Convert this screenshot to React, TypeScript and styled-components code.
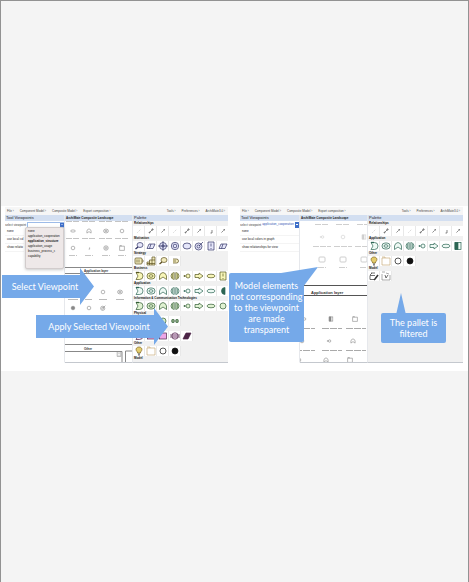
import React from "react";
import styled, { createGlobalStyle } from "styled-components";

const Global = createGlobalStyle`
  * { box-sizing: border-box; }
  body { margin: 0; background: #f4f4f4; font-family: "Liberation Sans", Arial, sans-serif; }
`;
const Page = styled.main`
  min-height: 100vh;
  padding-top: 205px;
  border: 1px solid #929292;
  border-bottom: 0;
  background: #f4f4f4;
  overflow: hidden;
`;
const Slide = styled.section`
  position: relative;
  display: grid;
  grid-template-columns: minmax(0, 1fr) minmax(0, 1fr);
  gap: 12px;
  padding: 1px 5px 8px 4px;
  background: #fff;
`;
const Screen = styled.article`
  display: flex;
  flex-direction: column;
  min-width: 0;
`;
const MenuBar = styled.nav`
  display: flex;
  justify-content: space-between;
  height: 8px;
  padding: 0 3px 0 2px;
  background: #f6f6f6;
`;
const MenuGroup = styled.div`
  display: flex;
  gap: 6px;
`;
const MenuButton = styled.button`
  border: 0;
  padding: 0;
  background: none;
  color: #444;
  font: 3px/7px "Liberation Sans", Arial, sans-serif;
  white-space: nowrap;
`;
const Columns = styled.div`
  display: grid;
  grid-template-columns: 60px minmax(0, 1fr) 95px;
  flex: 1;
`;
const Panel = styled.section<{ $shade?: boolean; $plain?: boolean }>`
  min-width: 0;
  overflow: hidden;
  border-right: ${(p) => (p.$shade ? "0" : "1px solid #e6e8ec")};
  border-bottom: 1px solid ${(p) => (p.$plain ? "#fff" : "#c4c8ce")};
  background: ${(p) => (p.$shade ? "#f1f1f1" : "#fff")};
`;
const PanelTitle = styled.h2<{ $small?: boolean }>`
  height: 6px;
  margin: 0;
  padding-left: 1px;
  background: #d3dff1;
  color: #222;
  font-size: ${(p) => (p.$small ? 3 : 4)}px;
  line-height: 6px;
  font-weight: ${(p) => (p.$small ? 700 : 400)};
  white-space: nowrap;
`;
const Field = styled.label`
  display: flex;
  align-items: center;
  height: 7px;
  color: #444;
  font-size: 3px;
  white-space: nowrap;
`;
const SelectWrap = styled.span<{ $open: boolean }>`
  display: flex;
  flex: 1;
  height: 6px;
  margin-left: 1px;
  border: ${(p) => (p.$open ? "1px solid #9dbbe8" : "0")};
  background: #fff;
`;
const Select = styled.select`
  appearance: none;
  flex: 1;
  min-width: 0;
  border: 0;
  padding: 0;
  background: none;
  color: #3455b4;
  font: 3px/5px "Liberation Sans", Arial, sans-serif;
`;
const Chevron = styled.svg`
  width: 4px;
  height: 100%;
  background: #3e6fc9;
`;
const Option = styled.p<{ $narrow: boolean }>`
  width: ${(p) => (p.$narrow ? "19px" : "auto")};
  overflow: hidden;
  margin: 0;
  padding-left: 2px;
  border-bottom: 1px solid #f4f4f4;
  color: #222;
  font-size: 3px;
  line-height: 7px;
  white-space: nowrap;
`;
const Popup = styled.ul`
  position: absolute;
  top: 21px;
  left: 24px;
  width: 39px;
  margin: 0;
  padding: 1px 2px 9px;
  border: 1px solid #d2cccc;
  border-radius: 2px;
  background: #eee8e8;
  box-shadow: 0 1px 3px #9998;
  list-style: none;
  color: #111;
  font-size: 3px;
  line-height: 5px;
  z-index: 2;
`;
const PopupItem = styled.li<{ $selected: boolean }>`
  font-weight: ${(p) => (p.$selected ? 700 : 400)};
  white-space: nowrap;
`;
const Diagram = styled.svg`
  display: block;
  width: 68px;
  height: 141px;
  font-family: "Liberation Sans", Arial, sans-serif;
`;
const GroupTitle = styled.h3`
  height: 5px;
  margin: 0;
  padding-left: 1px;
  color: #111;
  font-size: 3px;
  line-height: 5px;
  font-weight: 700;
  white-space: nowrap;
`;
const ToolRow = styled.div`
  display: flex;
  height: 10px;
  overflow: hidden;
`;
const Tool = styled.button`
  display: flex;
  flex: none;
  width: 12px;
  height: 10px;
  padding: 0 1px;
  border: 0;
  border-right: 1px solid #e8e8e8;
  background: #fff;
`;
const ToolIcon = styled.svg`
  width: 10px;
  height: 10px;
  overflow: visible;
`;
const Arrow = styled.div<{ $x: number; $y: number; $w: number }>`
  position: absolute;
  display: flex;
  align-items: center;
  justify-content: center;
  left: ${(p) => p.$x}px;
  top: ${(p) => p.$y}px;
  width: ${(p) => p.$w}px;
  height: 37px;
  padding-right: 6px;
  clip-path: polygon(0 7px, calc(100% - 14px) 7px, calc(100% - 14px) 0, 100% 50%, calc(100% - 14px) 100%, calc(100% - 14px) 30px, 0 30px);
  background: #75a9e9;
  color: #fff;
  font: 9px/11px Lato, sans-serif;
  white-space: nowrap;
  z-index: 3;
`;
const Bubble = styled.div<{ $x: number; $y: number; $w: number; $pad: number }>`
  position: absolute;
  left: ${(p) => p.$x}px;
  top: ${(p) => p.$y}px;
  width: ${(p) => p.$w}px;
  padding: ${(p) => p.$pad}px 0;
  border-radius: 2px;
  background: #75a9e9;
  color: #fff;
  font: 9px/11px Lato, sans-serif;
  text-align: center;
  white-space: pre-line;
  z-index: 3;
`;
const Tail = styled.svg<{ $x: number; $y: number }>`
  position: absolute;
  left: ${(p) => p.$x}px;
  top: ${(p) => p.$y}px;
  fill: #75a9e9;
`;

const shapes: Record<string, React.ReactNode> = {
  line: <path d="M3.500 6.500 6.500 3.500" />,
  dots: <path d="M3.500 6.500 6.500 3.500" strokeDasharray="1 1" opacity=".5" />,
  link: <><path d="M3.500 6.500 6.500 3.500" /><circle cx="3.500" cy="6.500" r=".5" /><circle cx="6.500" cy="3.500" r=".7" /></>,
  head: <><path d="M3.500 6.500 6.500 3.500" strokeDasharray="2 .5" /><path d="M5.500 3.500h1v1" /></>,
  corner: <path d="M6 4v3H4.500" />,
  magnify: <><ellipse cx="6" cy="4" rx="3" ry="2.500" /><path d="M4 6 1.500 8" strokeWidth="1.400" /></>,
  slant: <path d="M3 3h6L7 7.500H1Z M5 3 3.500 7.500" />,
  wheel: <><circle cx="5" cy="5" r="3.500" /><circle cx="5" cy="5" r="1.200" /><path d="M5 0v10M0 5h10" /></>,
  target: <><circle cx="5" cy="5" r="3.700" /><circle cx="5" cy="5" r="1.800" /></>,
  oval: <ellipse cx="5" cy="5" rx="4" ry="3" />,
  goal: <><circle cx="4.500" cy="5.500" r="3.500" /><circle cx="4.500" cy="5.500" r="1.500" /><path d="M5 5 9 1" /></>,
  note: <><path d="M2 1h6v8H2Z" /><path d="M5 2.500v3M5 7v1" /></>,
  resource: <><rect x="1" y="2" width="7" height="6" rx="1" /><path d="M3 3.500v3M5 3.500v3M8 4h1v2H8" /></>,
  steps: <path d="M1 9V6h2.500V4H6V1h3v8ZM3.500 6v3M6 4v5M1 7.500h8M6 4h3" />,
  open: <path d="M3 3h3.500a2 2 0 0 1 0 4H3M3 5h3" />,
  dee: <><path d="M2 1.500h3.500a3.500 3.500 0 0 1 0 7H2L4 5Z" /><path d="M2 1.500h3" strokeWidth="1.300" /></>,
  collab: <><rect x="1" y="2" width="8" height="6" rx="3" /><ellipse cx="5" cy="5" rx="2" ry="1.300" /></>,
  arch: <path d="M1.500 8.500V5Q2 2 5 1.500 8 2 8.500 5v3.500L5 6Z" />,
  interact: <path d="M4.200 1.500v7Q1 8 1 5t3.200-3.500ZM5.800 1.500v7Q9 8 9 5T5.800 1.500ZM2.700 3v4M7.300 3v4" />,
  event: <><circle cx="6" cy="5" r="2" /><path d="M1.500 5h2.500M3 4 2 5l1 1" /></>,
  process: <path d="M1 3.500h4V2l4 3-4 3V6.500H1Z" />,
  service: <ellipse cx="5" cy="5" rx="4" ry="1.800" />,
  half: <><rect x="2" y="1.500" width="6" height="7" /><path d="M2 1.500h3v7H2Z" fill="currentColor" /></>,
  solidhalf: <path d="M7 1.500a3.500 3.500 0 1 0 0 7Z" fill="currentColor" />,
  network: <path d="M1 5h8M2 3.500h2v3H2ZM6 3.500h2v3H6Z" />,
  package: <rect x="1.500" y="2" width="7" height="6" fill="#eda6e6" />,
  gap: <><circle cx="5" cy="5" r="3.200" /><path d="M0 4h10M0 6h10" /></>,
  plateau: <path d="M4 2h5L8 4H3ZM3 4h5L7 6H2ZM2 6h5L6 8H1Z" fill="currentColor" />,
  bulb: <><path d="M3.500 6C1 4 2 1 5 1s4 3 1.500 5v1h-3Z" fill="#e4cd6c" /><path d="M4 8h2M4 9h2" stroke="#333" /></>,
  folder: <><path d="M1 2h8v7H1Z" /><path d="M1 1h3v1" /></>,
  ring: <circle cx="5" cy="5" r="3" />,
  disc: <circle cx="5" cy="5" r="3" fill="currentColor" />,
  model: <><path d="M1 8.500V4.500h5M2 2h4M1 4l2-2M1 8.500h4" /><path d="m9 4-3 4-1 1" strokeWidth="1.600" /></>,
  view: <><path d="M1 1h3M1 3v6h8V4M5 2l3 1" stroke="#888" /><path d="m4 4 1 3 2-3" /></>,
};

type Group = { title: string; tools: string[]; ink: string; fill?: string };
const basic = ["dee", "collab", "arch", "interact", "event", "process", "service"];
const relations: Group = { title: "Relationships", tools: ["dots", "link", "head", "dots", "link", "head", "corner", "head"], ink: "#555" };
const application: Group = { title: "Application", tools: [...basic, "half"], ink: "#2c6654", fill: "#eef9f4" };
const other: Group = { title: "Other", tools: ["bulb", "folder", "ring", "disc"], ink: "#111" };
const fullGroups: Group[] = [
  relations,
  { title: "Motivation", tools: ["magnify", "slant", "wheel", "target", "oval", "goal", "note", "slant"], ink: "#303365", fill: "#e6e7fa" },
  { title: "Strategy", tools: ["resource", "steps", "magnify", "open"], ink: "#5d5020", fill: "#f2ebbd" },
  { title: "Business", tools: [...basic, "note"], ink: "#555620", fill: "#f8f6b8" },
  { ...application, tools: [...basic, "solidhalf"] },
  { title: "Information & Communication Technologies", tools: [...basic, "ring"], ink: "#315c34", fill: "#e0f2d2" },
  { title: "Physical", tools: ["half", "collab", "ring", "network"], ink: "#315c34", fill: "#d9efc7" },
  { title: "Migration", tools: ["dee", "package", "package", "gap", "plateau"], ink: "#4d2748", fill: "#f2d8f0" },
  other,
  { title: "Model", tools: [], ink: "#333" },
];
const filteredGroups: Group[] = [relations, application, other, { title: "Model", tools: ["model", "view"], ink: "#333" }];

const inkOf = (group: Group, tool: string) => {
  if (tool === "folder") return "#c9ae7c";
  if (tool === "bulb") return "#80651f";
  return group.ink;
};

function Palette({ groups }: { groups: Group[] }) {
  return (
    <Panel $shade>
      <PanelTitle>Palette</PanelTitle>
      {groups.map((g) => (
        <React.Fragment key={g.title}>
          <GroupTitle>{g.title}</GroupTitle>
          {g.tools.length > 0 && (
            <ToolRow>
              {g.tools.map((t, i) => (
                <Tool key={i} type="button" aria-label={`${g.title} ${t}`}>
                  <ToolIcon viewBox="0 0 10 10" color={inkOf(g, t)} fill={g.fill ?? "none"} stroke="currentColor" strokeWidth=".7">
                    {shapes[t]}
                  </ToolIcon>
                </Tool>
              ))}
            </ToolRow>
          )}
        </React.Fragment>
      ))}
    </Panel>
  );
}

const Node = ({ x, y, kind }: { x: number; y: number; kind: string }) => (
  <g transform={`translate(${x - 3} ${y - 3}) scale(.6)`} fill="none" stroke="currentColor" color="#888" strokeWidth="1">
    {shapes[kind]}
  </g>
);

function FullDiagram() {
  return (
    <Diagram viewBox="0 0 68 141" fill="none" stroke="#888" strokeWidth="1">
      {[8, 24, 41, 57].map((x, i) => (
        <g key={x}>
          <path d={`M${x - 7} .500h13M${x - 7} 17.500h13M${x - 4} 34.500h8`} stroke="#c4c4c4" strokeDasharray="6 1" />
          <Node x={x} y={10} kind={["service", "arch", "collab", "ring"][i]} />
          <Node x={x} y={27} kind={["ring", "corner", "target", "folder"][i]} />
        </g>
      ))}
      <path d="M0 46.500h68M0 52.500h68" />
      <text x="19" y="51" fontSize="3" fontWeight="700" fill="#333" stroke="none">Application layer</text>
      <Node x={38} y={71} kind="ring" />
      <Node x={55} y={71} kind="collab" />
      <path d="M3 78.500h10M20 78.500h7M34 78.500h8M51 78.500h8" stroke="#bbb" />
      <Node x={8} y={87} kind="disc" />
      <Node x={24} y={87} kind="ring" />
      <Node x={38} y={87} kind="goal" />
      <path d="M0 123.500h68M0 130.500h57v11M60.500 141v-11h7" />
      <text x="19" y="129" fontSize="3" fontWeight="700" fill="#333" stroke="none">Other</text>
      <Node x={54} y={133} kind="note" />
    </Diagram>
  );
}

function FadedDiagram() {
  return (
    <Diagram viewBox="0 0 68 141" fill="none" stroke="#888" strokeWidth="1">
      {[22, 43, 64].map((x, i) => (
        <g key={x} opacity=".4">
          <path d={`M${x - 7} 3.500h13M${x - 9} 25.500h18M${x - 4} 46.500h8`} strokeDasharray="6 1" />
          <Node x={x} y={16} kind={["event", "ring", "half"][i]} />
          <rect x={x - 3} y="36" width="6" height="5" rx="1" />
        </g>
      ))}
      <path d="M0 64.500h68M0 74.500h68" stroke="#555" />
      <text x="11" y="73" fontSize="4" fontWeight="700" fill="#333" stroke="none">Application layer</text>
      {[4, 31, 55].map((x, i) => (
        <g key={x}>
          <path d={`M${x - 9} 107.500h20M${x - 9} 129.500h20`} stroke="#aaa" strokeDasharray="7 1" />
          <Node x={x} y={98} kind={["event", "half", "folder"][i]} />
          <Node x={x - 2} y={120} kind={["ring", "event", "arch"][i]} />
          <Node x={x - 5} y={139} kind={["ring", "arch", "folder"][i]} />
        </g>
      ))}
    </Diagram>
  );
}

const viewpoints = ["none", "application_cooperation", "application_structure", "application_usage", "business_process_c", "capability"];

function Modeler({ filtered = false }: { filtered?: boolean }) {
  return (
    <Screen>
      <MenuBar>
        <MenuGroup>
          {["File ›", "Component Model ›", "Composite Model ›", "Export composition ›"].map((m) => <MenuButton key={m} type="button">{m}</MenuButton>)}
        </MenuGroup>
        <MenuGroup>
          {["Tools ›", "Preferences ›", "ArchiMate3.0 ›"].map((m) => <MenuButton key={m} type="button">{m}</MenuButton>)}
        </MenuGroup>
      </MenuBar>
      <Columns>
        <Panel $plain>
          <PanelTitle>Tool Viewpoints</PanelTitle>
          <Field>
            select viewpoint
            <SelectWrap $open={!filtered}>
              <Select defaultValue={filtered ? "application_cooperation" : ""}>
                <option value="" />
                {viewpoints.map((v) => <option key={v}>{v}</option>)}
              </Select>
              <Chevron viewBox="0 0 4 6" fill="none" stroke="#fff"><path d="m1 2 1 1 1-1" /></Chevron>
            </SelectWrap>
          </Field>
          <Option $narrow={!filtered}>none</Option>
          <Option $narrow={!filtered}>{filtered ? "use local colors in graph" : "use local col"}</Option>
          <Option $narrow={!filtered}>{filtered ? "show relationships for view" : "show relatio"}</Option>
        </Panel>
        <Panel>
          <PanelTitle $small>ArchiMate Composite Landscape</PanelTitle>
          {filtered ? <FadedDiagram /> : <FullDiagram />}
        </Panel>
        <Palette groups={filtered ? filteredGroups : fullGroups} />
      </Columns>
    </Screen>
  );
}

export default function App() {
  return (
    <>
      <Global />
      <Page>
        <Slide>
          <Modeler />
          <Modeler filtered />
          <Popup>
            {viewpoints.map((v, i) => <PopupItem key={v} $selected={i === 2}>{v}</PopupItem>)}
          </Popup>
          <Arrow $x={1} $y={62} $w={92}>Select Viewpoint</Arrow>
          <Arrow $x={35} $y={102} $w={132}>Apply Selected Viewpoint</Arrow>
          <Bubble $x={228} $y={67} $w={75} $pad={7}>
            <Tail $x={46} $y={-6} width="43" height="20" viewBox="0 0 43 20"><path d="M0 7 43 0 28 20Z" /></Tail>
            {"Model elements\nnot corresponding\nto the viewpoint\nare made\ntransparent"}
          </Bubble>
          <Bubble $x={380} $y={107} $w={65} $pad={4}>
            <Tail $x={15} $y={-20} width="10" height="22" viewBox="0 0 10 22"><path d="M5 0 10 22H0Z" /></Tail>
            {"The pallet is\nfiltered"}
          </Bubble>
        </Slide>
      </Page>
    </>
  );
}
